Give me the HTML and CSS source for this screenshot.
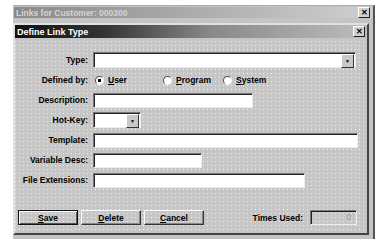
FILE: index.html
```html
<!DOCTYPE html>
<html lang="en">
<head>
  <meta charset="UTF-8">
  <title>Define Link Type</title>
  <link rel="stylesheet" href="styles.css">
</head>
<body>
  <div class="window">
    <div class="titlebar inactive">
      <span>Links for Customer: 000300</span>
      <span class="close">&#x2715;</span>
    </div>

    <div class="dialog">
      <div class="titlebar active">
        <span>Define Link Type</span>
        <span class="close">&#x2715;</span>
      </div>

      <div class="form">
        <label>Type:</label>
        <div class="field combo w-type"><span class="arrow">&#x25BC;</span></div>

        <label>Defined by:</label>
        <div class="radios">
          <span class="radio checked"></span><span class="opt opt-user"><u>U</u>ser</span>
          <span class="radio"></span><span class="opt opt-prog"><u>P</u>rogram</span>
          <span class="radio"></span><span class="opt"><u>S</u>ystem</span>
        </div>

        <label>Description:</label>
        <div class="field w-desc"></div>

        <label>Hot-Key:</label>
        <div class="field combo w-hot"><span class="arrow">&#x25BC;</span></div>

        <label>Template:</label>
        <div class="field w-tpl"></div>

        <label>Variable Desc:</label>
        <div class="field w-var"></div>

        <label>File Extensions:</label>
        <div class="field w-ext"></div>
      </div>

      <div class="footer">
        <button class="btn default"><u>S</u>ave</button>
        <button class="btn"><u>D</u>elete</button>
        <button class="btn"><u>C</u>ancel</button>
        <span class="used-label">Times Used:</span>
        <div class="field used">0</div>
      </div>
    </div>
  </div>
</body>
</html>
```

FILE: styles.css
```css
body { margin: 0; background: #fff; font-family: "Liberation Sans", Arial, sans-serif; overflow: hidden; }

.window {
  margin: 5px 0 0 13px;
  width: 360px;
  height: 232px;
  padding-top: 1px;
  border-top: 1px solid #aaa;
  border-right: 2px solid #555;
  background: #c4c4c4;
}

.titlebar { display: flex; align-items: center; justify-content: space-between; font-weight: bold; }
.titlebar.inactive {
  height: 11px;
  margin: 0 1px;
  padding-left: 2px;
  background: linear-gradient(to right, #8a8a8a, #a8a8a8 45%, #cfcfcf);
  color: #d4d4d4;
  font-size: 8.5px;
}
.titlebar.active {
  height: 13px;
  padding-left: 2px;
  background: linear-gradient(to right, #111 0%, #333 25%, #888 55%, #bdbdbd 100%);
  color: #fff;
  font-size: 9px;
}

.close {
  width: 10px;
  height: 9px;
  margin-right: 2px;
  background: #d0d0d0;
  border: 1px solid;
  border-color: #fff #222 #222 #fff;
  color: #000;
  font-size: 8px;
  line-height: 9px;
  text-align: center;
}

.dialog {
  margin-top: 5px;
  width: 352px;
  border: 2px solid;
  border-color: #e0e0e0 #444 #444 #e0e0e0;
  background-color: #c6c6c6;
  background-image: conic-gradient(from 270deg at 1px 1px, #f2f2f2 90deg, transparent 0);
  background-size: 4px 4px;
}

.form {
  display: grid;
  grid-template-columns: 73px auto;
  grid-auto-rows: 20px;
  column-gap: 5px;
  align-items: center;
  padding-top: 12px;
}
.form label { text-align: right; font-size: 8.5px; font-weight: bold; color: #000; }

.field {
  position: relative;
  box-sizing: border-box;
  height: 15px;
  background: #fff;
  border: 1px solid;
  border-color: #777 #eee #eee #777;
  box-shadow: inset 1px 1px 0 #222;
}
.combo { height: 16px; }
.arrow {
  position: absolute;
  top: 1px;
  right: 1px;
  width: 11px;
  height: 12px;
  background: #c8c8c8;
  border: 1px solid;
  border-color: #fff #333 #333 #fff;
  font-size: 5px;
  line-height: 12px;
  text-align: center;
}

.w-type { width: 263px; }
.w-desc { width: 160px; }
.w-hot { width: 48px; }
.w-tpl { width: 265px; }
.w-var { width: 109px; }
.w-ext { width: 212px; }

.radios { display: flex; align-items: center; font-size: 8.5px; font-weight: bold; }
.radio {
  box-sizing: border-box;
  width: 9px;
  height: 9px;
  margin: 0 4px 0 2px;
  border-radius: 50%;
  background: #fff;
  border: 1px solid;
  border-color: #555 #eee #eee #555;
}
.radio.checked { background: radial-gradient(circle, #000 1.5px, #fff 2px); }
.opt-user { width: 53px; }
.opt-prog { width: 45px; }

.footer {
  display: flex;
  align-items: center;
  gap: 3px;
  margin-top: 20px;
  padding: 0 10px 8px 3px;
}
.btn {
  box-sizing: border-box;
  width: 60px;
  height: 15px;
  padding: 0;
  background: transparent;
  border: 1px solid;
  border-color: #fafafa #333 #333 #fafafa;
  box-shadow: inset -1px -1px 0 #888;
  font-family: "Liberation Sans", Arial, sans-serif;
  font-size: 8.5px;
  font-weight: bold;
  color: #000;
}
.btn.default { border-color: #111; box-shadow: inset 1px 1px 0 #fafafa, inset -1px -1px 0 #555; }
.used-label { margin-left: auto; margin-right: 4px; font-size: 8.5px; font-weight: bold; color: #000; }
.field.used {
  width: 47px;
  background: transparent;
  color: #999;
  font-size: 8.5px;
  line-height: 13px;
  text-align: right;
  padding-right: 5px;
}
```
